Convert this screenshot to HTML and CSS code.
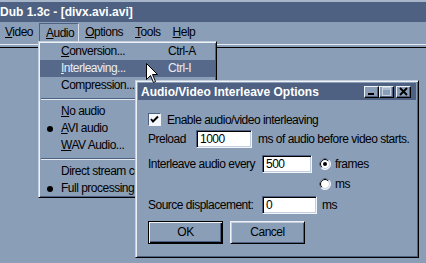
FILE: index.html
```html
<!DOCTYPE html>
<html lang="en">
<head>
    <meta charset="UTF-8">
    <title>VirtualDub 1.3c - [divx.avi.avi]</title>
    <link rel="stylesheet" href="styles.css">
</head>
<body>
    <div class="app-title">Dub 1.3c - [divx.avi.avi]</div>

    <div class="menubar">
        <span class="menu-item"><u>V</u>ideo</span>
        <span class="menu-item open"><u>A</u>udio</span>
        <span class="menu-item"><u>O</u>ptions</span>
        <span class="menu-item"><u>T</u>ools</span>
        <span class="menu-item"><u>H</u>elp</span>
    </div>

    <div class="client">
        <div class="client-inner"></div>
    </div>

    <!-- Audio menu, dropped down -->
    <div class="popup">
        <div class="popup-row"><span class="mark"></span><span class="label"><u>C</u>onversion...</span><span class="key">Ctrl-A</span></div>
        <div class="popup-row active"><span class="mark"></span><span class="label"><u>I</u>nterleaving...</span><span class="key">Ctrl-I</span></div>
        <div class="popup-row"><span class="mark"></span><span class="label">Compression...</span></div>
        <div class="popup-sep"></div>
        <div class="popup-row"><span class="mark"></span><span class="label"><u>N</u>o audio</span></div>
        <div class="popup-row"><span class="mark"><i class="dot"></i></span><span class="label"><u>A</u>VI audio</span></div>
        <div class="popup-row"><span class="mark"></span><span class="label"><u>W</u>AV Audio...</span></div>
        <div class="popup-sep"></div>
        <div class="popup-row"><span class="mark"></span><span class="label">Direct stream copy</span></div>
        <div class="popup-row"><span class="mark"><i class="dot"></i></span><span class="label">Full processing</span></div>
    </div>

    <!-- Interleave dialog -->
    <div class="dialog">
        <div class="dialog-title">
            <span class="dialog-caption">Audio/Video Interleave Options</span>
            <div class="caption-buttons">
                <span class="cap-btn"><svg width="9" height="9" viewBox="0 0 9 9"><rect x="1" y="6" width="6" height="2" fill="#000"/></svg></span>
                <span class="cap-btn"><svg width="9" height="9" viewBox="0 0 9 9"><rect x="0.5" y="0.5" width="8" height="8" fill="none" stroke="#c8d3e2"/><rect x="0.5" y="1.5" width="8" height="1" fill="#c8d3e2"/></svg></span>
                <span class="cap-btn close"><svg width="9" height="9" viewBox="0 0 9 9"><path d="M1 1 L8 8 M8 1 L1 8" stroke="#000" stroke-width="1.8"/></svg></span>
            </div>
        </div>

        <div class="dialog-body">
            <div class="field-row check-row">
                <span class="checkbox"><svg width="11" height="11" viewBox="0 0 11 11"><path d="M2 5 L4 7.5 L9 2.5" fill="none" stroke="#000" stroke-width="2"/></svg></span>
                <span class="check-label">Enable audio/video interleaving</span>
            </div>

            <div class="field-row">
                <span class="label label-short">Preload</span>
                <span class="textbox tb-preload">1000</span>
                <span class="unit">ms of audio before video starts.</span>
            </div>

            <div class="field-row">
                <span class="label label-long">Interleave audio every</span>
                <span class="textbox tb-every">500</span>
                <svg class="radio" width="12" height="12" viewBox="0 0 12 12">
                    <circle cx="6" cy="6" r="5.5" fill="#fff" stroke="#f2f5f9"/>
                    <path d="M2.1 9.9 A5.5 5.5 0 0 1 9.9 2.1" fill="none" stroke="#4e6182"/>
                    <circle cx="6" cy="6" r="4.5" fill="#fff" stroke="#c4cfde"/>
                    <path d="M2.8 9.2 A4.5 4.5 0 0 1 9.2 2.8" fill="none" stroke="#000"/>
                    <circle cx="6" cy="6" r="2" fill="#000"/>
                </svg>
                <span class="radio-label">frames</span>
            </div>

            <div class="field-row radio-row">
                <svg class="radio" width="12" height="12" viewBox="0 0 12 12">
                    <circle cx="6" cy="6" r="5.5" fill="#fff" stroke="#f2f5f9"/>
                    <path d="M2.1 9.9 A5.5 5.5 0 0 1 9.9 2.1" fill="none" stroke="#4e6182"/>
                    <circle cx="6" cy="6" r="4.5" fill="#fff" stroke="#c4cfde"/>
                    <path d="M2.8 9.2 A4.5 4.5 0 0 1 9.2 2.8" fill="none" stroke="#000"/>
                </svg>
                <span class="radio-label">ms</span>
            </div>

            <div class="field-row source-row">
                <span class="label label-long">Source displacement:</span>
                <span class="textbox tb-source">0</span>
                <span class="unit unit-ms">ms</span>
            </div>

            <div class="button-row">
                <span class="button default">OK</span>
                <span class="button">Cancel</span>
            </div>
        </div>
    </div>

    <svg class="cursor" width="13" height="21" viewBox="0 0 13 21">
        <path d="M0.5 0.5 L0.5 16.5 L4.5 12.5 L7.5 19.5 L9.5 18.5 L6.5 11.5 L11.5 11.5 Z" fill="#fff" stroke="#000"/>
    </svg>
</body>
</html>
```

FILE: styles.css
```css
* {
    margin: 0;
    padding: 0;
    box-sizing: border-box;
}

body {
    width: 426px;
    height: 263px;
    overflow: hidden;
    position: relative;
    background-color: #8a9eb8;
    color: #000;
    font-family: "Liberation Sans", Arial, sans-serif;
    font-size: 12px;
    letter-spacing: -0.5px;
}

/* main window */

.app-title {
    height: 22px;
    border-top: 2px solid #a6b5ca;
    background-color: #4e6182;
    color: #fff;
    font: bold 12px "Liberation Sans", Arial, sans-serif;
    letter-spacing: 0;
    line-height: 20px;
    white-space: nowrap;
}

.menubar {
    display: flex;
    height: 21px;
    padding-top: 1px;
}

.menu-item {
    height: 19px;
    padding: 0 5px;
    border: 1px solid transparent;
    line-height: 17px;
}

.menu-item:first-child {
    margin-left: -1px;
}

.menu-item.open {
    padding: 1px 4px 0 6px;
    border-color: #4e6182 #dbe3ed #dbe3ed #4e6182;
}

.client {
    margin-top: 1px;
    border-top: 1px solid #e4eaf1;
}

.client-inner {
    margin-top: 2px;
    border-top: 1px solid #000;
}

/* dropped down menu */

.popup {
    position: absolute;
    left: 38px;
    top: 41px;
    width: 179px;
    padding: 1px 1px 0;
    background-color: #8a9eb8;
    border: 1px solid;
    border-color: #c4cfde #000 #000 #c4cfde;
    box-shadow: inset 1px 1px #eef2f7, inset -1px -1px #4e6182;
}

.popup-row {
    display: flex;
    height: 17px;
    line-height: 17px;
    white-space: nowrap;
}

.popup-row.active {
    background-color: #56698b;
    color: #e8eef5;
}

.mark {
    display: flex;
    align-items: center;
    width: 21px;
    flex-shrink: 0;
}

.dot {
    width: 6px;
    height: 6px;
    margin-left: 7px;
    border-radius: 50%;
    background-color: #000;
}

.label {
    width: 107px;
    flex-shrink: 0;
}

.popup-sep {
    height: 2px;
    margin: 4px 1px 3px;
    border-top: 1px solid #4e6182;
    border-bottom: 1px solid #e4eaf1;
}

/* dialog */

.dialog {
    position: absolute;
    left: 135px;
    top: 80px;
    width: 284px;
    height: 178px;
    padding: 2px;
    background-color: #8a9eb8;
    border: 1px solid;
    border-color: #c4cfde #000 #000 #c4cfde;
    box-shadow: inset 1px 1px #eef2f7, inset -1px -1px #4e6182;
}

.dialog-title {
    display: flex;
    align-items: center;
    height: 17px;
    padding: 0 5px 0 3px;
    background-color: #4e6182;
    color: #fff;
    font: bold 12px "Liberation Sans", Arial, sans-serif;
    letter-spacing: 0;
}

.dialog-caption {
    flex: 1;
    white-space: nowrap;
}

.caption-buttons {
    display: flex;
}

.cap-btn {
    display: flex;
    align-items: center;
    justify-content: center;
    width: 15px;
    height: 12px;
    background-color: #8a9eb8;
    border: 1px solid;
    border-color: #eef2f7 #000 #000 #eef2f7;
    box-shadow: inset -1px -1px #4e6182;
}

.cap-btn.close {
    margin-left: 2px;
}

.dialog-body {
    padding: 13px 0 0 10px;
}

.field-row {
    display: flex;
    align-items: center;
    height: 18px;
    white-space: nowrap;
}

.check-row {
    height: 13px;
}

.checkbox {
    display: flex;
    align-items: center;
    justify-content: center;
    width: 13px;
    height: 13px;
    background-color: #f4f7fb;
    border: 1px solid;
    border-color: #4e6182 #f2f5f9 #f2f5f9 #4e6182;
}

.check-label {
    margin-left: 6px;
}

.field-row + .field-row {
    margin-top: 4px;
}

.field-row:nth-child(3) {
    margin-top: 7px;
}

.label-short {
    width: 48px;
}

.label-long {
    width: 114px;
}

.textbox {
    height: 18px;
    padding-left: 3px;
    background-color: #fff;
    border: 1px solid;
    border-color: #4e6182 #f2f5f9 #f2f5f9 #4e6182;
    box-shadow: inset 1px 1px #000, inset -1px -1px #c4cfde;
    line-height: 16px;
}

.tb-preload {
    width: 56px;
}

.tb-every {
    width: 50px;
}

.tb-source {
    width: 55px;
}

.unit {
    margin-left: 6px;
}

.unit-ms {
    margin-left: 5px;
}

.radio {
    margin-left: 7px;
    flex-shrink: 0;
}

.radio-label {
    margin-left: 4px;
}

.radio-row {
    height: 13px;
    padding-left: 164px;
}

.field-row.source-row {
    margin-top: 6px;
}

.button-row {
    display: flex;
    gap: 7px;
    margin-top: 7px;
}

.button {
    width: 75px;
    height: 23px;
    text-align: center;
    line-height: 21px;
    border: 1px solid;
    border-color: #eef2f7 #000 #000 #eef2f7;
    box-shadow: inset 1px 1px #c4cfde, inset -1px -1px #4e6182;
}

.button.default {
    border-color: #000;
    box-shadow: inset 1px 1px #eef2f7, inset -1px -1px #000, inset -2px -2px #4e6182;
}

.cursor {
    position: absolute;
    left: 146px;
    top: 63px;
}
```
